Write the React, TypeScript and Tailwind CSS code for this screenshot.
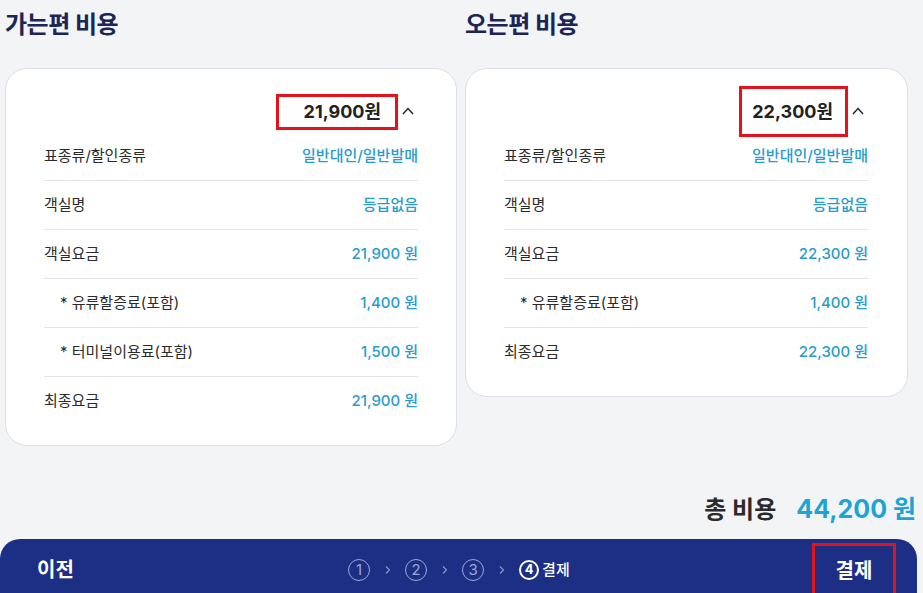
import React from "react";

type Row = { label: string; value: string; sub?: boolean };

const OUT_ROWS: Row[] = [
  { label: "표종류/할인종류", value: "일반대인/일반발매" },
  { label: "객실명", value: "등급없음" },
  { label: "객실요금", value: "21,900 원" },
  { label: "* 유류할증료(포함)", value: "1,400 원", sub: true },
  { label: "* 터미널이용료(포함)", value: "1,500 원", sub: true },
  { label: "최종요금", value: "21,900 원" },
];

const BACK_ROWS: Row[] = [
  { label: "표종류/할인종류", value: "일반대인/일반발매" },
  { label: "객실명", value: "등급없음" },
  { label: "객실요금", value: "22,300 원" },
  { label: "* 유류할증료(포함)", value: "1,400 원", sub: true },
  { label: "최종요금", value: "22,300 원" },
];

function ChevronUp() {
  return (
    <svg width="12" height="8" viewBox="0 0 12 8" className="ml-[4px] mr-[4px] mb-[2px]">
      <path d="M1 7 L6 1.5 L11 7" fill="none" stroke="#222" strokeWidth="1.4" />
    </svg>
  );
}

function FareCard({
  title,
  total,
  rows,
  boxClass,
  widthClass,
  padClass,
}: {
  title: string;
  total: string;
  rows: Row[];
  boxClass: string;
  widthClass: string;
  padClass: string;
}) {
  return (
    <div className={widthClass}>
      <h2 className="h-[68px] pt-[8px] text-[24px] font-bold leading-[34px] text-[#1b2556] tracking-[-0.5px]">
        {title}
      </h2>
      <div className={`rounded-[22px] border border-[#dcdfe5] bg-white pb-[19px] ${padClass}`}>
        <div className="flex h-[63px] items-center justify-end pt-[22px]">
          <div
            className={`flex items-center justify-end border-[3px] border-[#e3121b] text-[18px] font-bold text-[#222] ${boxClass}`}
          >
            {total}
          </div>
          <ChevronUp />
        </div>
        {rows.map((row, i) => (
          <div
            key={row.label}
            className={`flex h-[49px] items-center justify-between text-[15px] ${
              i < rows.length - 1 ? "border-b border-[#e3e5e9]" : ""
            }`}
          >
            <span className={`text-[#2b2b2b] ${row.sub ? "pl-[16px]" : ""}`}>{row.label}</span>
            <span className="font-medium text-[#2a9ccb]">{row.value}</span>
          </div>
        ))}
      </div>
    </div>
  );
}

function Step({ n, active }: { n: number; active?: boolean }) {
  return (
    <span
      className={`flex items-center justify-center rounded-full ${
        active
          ? "h-[20px] w-[20px] border-2 border-white text-[13px] font-bold text-white"
          : "h-[22px] w-[22px] border border-[#9aa6d8] text-[15px] text-[#9aa6d8]"
      }`}
    >
      {n}
    </span>
  );
}

function Sep() {
  return (
    <svg width="9" height="10" viewBox="0 0 9 10" className="mx-[13px]">
      <path d="M3 1.5 L6.5 5 L3 8.5" fill="none" stroke="#8d99cf" strokeWidth="1.1" />
    </svg>
  );
}

export default function App() {
  return (
    <div
      className="h-[593px] w-[923px] overflow-hidden bg-[#f3f4f6]"
      style={{ fontFamily: 'Inter, "Noto Sans CJK KR", sans-serif' }}
    >
      <div className="flex items-start gap-[8px] pl-[5px]">
        <FareCard
          title="가는편 비용"
          total="21,900원"
          rows={OUT_ROWS}
          boxClass="h-[36px] w-[122px] pr-[14px]"
          widthClass="w-[452px]"
          padClass="px-[38px]"
        />
        <FareCard
          title="오는편 비용"
          total="22,300원"
          rows={BACK_ROWS}
          boxClass="h-[51px] w-[109px] pr-[12px]"
          widthClass="w-[443px]"
          padClass="pl-[38px] pr-[39px]"
        />
      </div>

      <div className="mt-[45px] flex h-[38px] items-center justify-end gap-[20px] pr-[7px]">
        <span className="text-[24px] font-bold text-[#2b2b2b]">총 비용</span>
        <span className="text-[25px] font-bold text-[#1ea3d6]">44,200 원</span>
      </div>

      <div className="mt-[10px] flex h-[62px] w-[917px] items-center justify-between rounded-t-[20px] bg-[#1d2f85] pl-[37px] pr-[21px]">
        <span className="text-[20px] font-bold text-white">이전</span>
        <div className="ml-[32px] flex items-center">
          <Step n={1} />
          <Sep />
          <Step n={2} />
          <Sep />
          <Step n={3} />
          <Sep />
          <Step n={4} active />
          <span className="ml-[3px] text-[15px] font-medium text-white">결제</span>
        </div>
        <div className="flex h-[56px] w-[84px] items-start justify-center self-start mt-[4px] pt-[11px] border-[3px] border-b-0 border-[#e3121b]">
          <span className="text-[20px] font-bold leading-[28px] text-white">결제</span>
        </div>
      </div>
    </div>
  );
}
